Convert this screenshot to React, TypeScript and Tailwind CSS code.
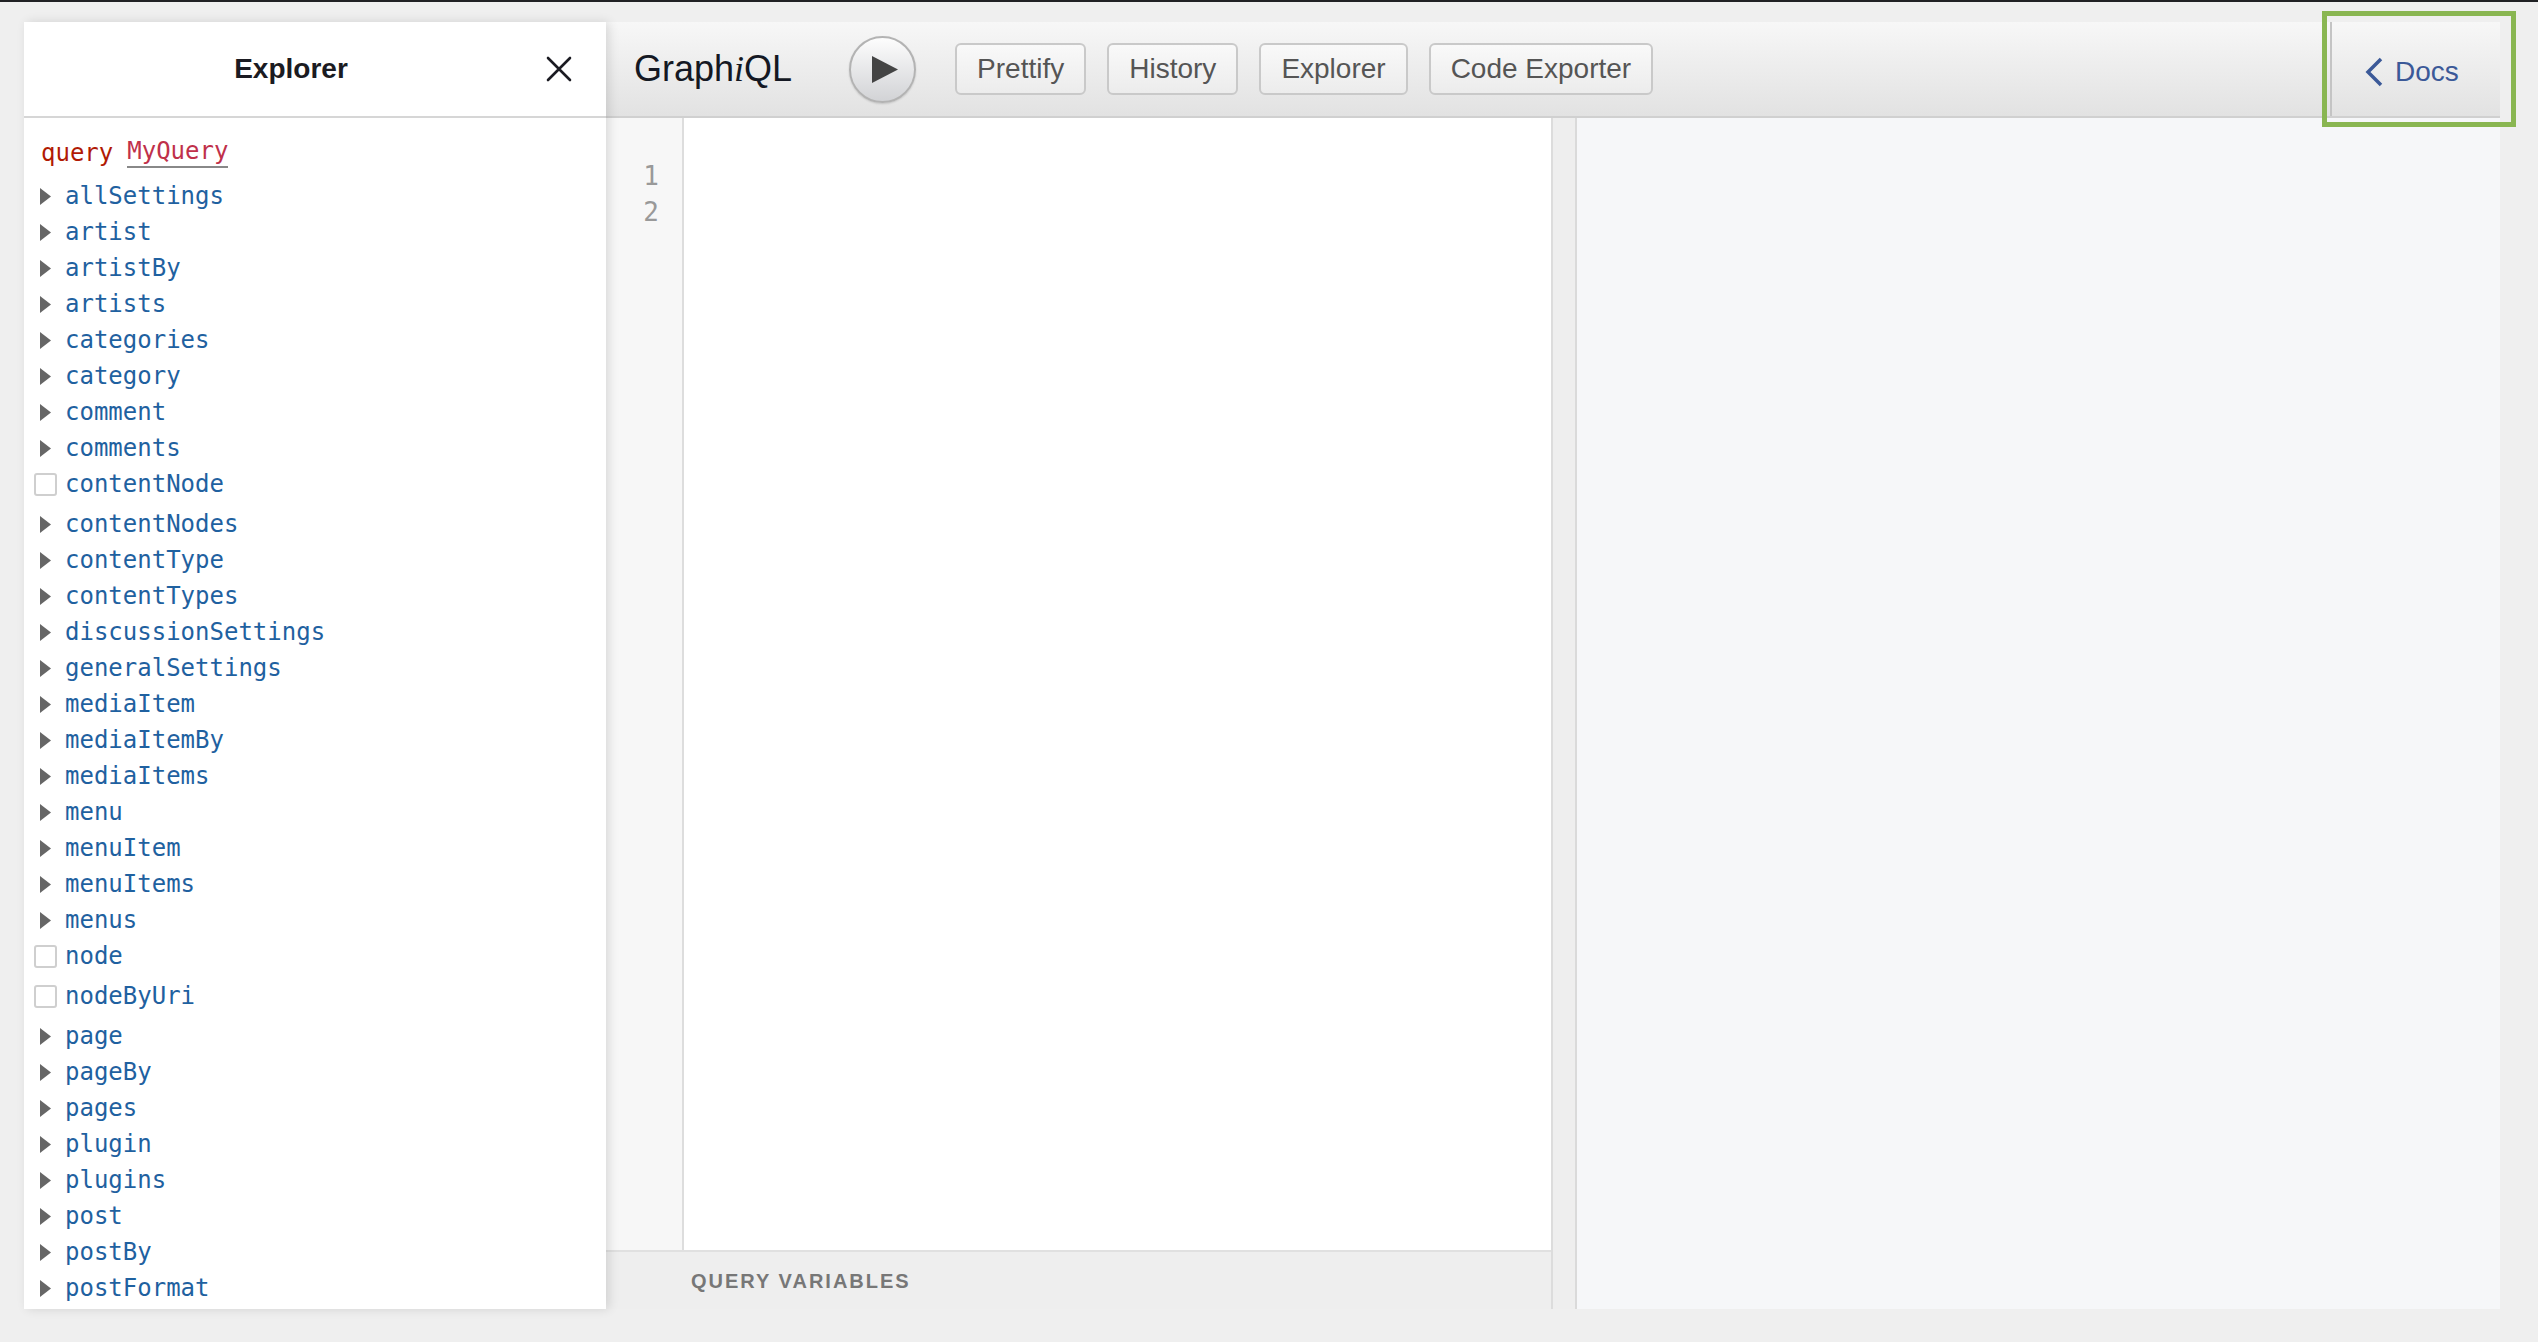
import React from "react";

const fields: { name: string; box?: boolean }[] = [
  { name: "allSettings" },
  { name: "artist" },
  { name: "artistBy" },
  { name: "artists" },
  { name: "categories" },
  { name: "category" },
  { name: "comment" },
  { name: "comments" },
  { name: "contentNode", box: true },
  { name: "contentNodes" },
  { name: "contentType" },
  { name: "contentTypes" },
  { name: "discussionSettings" },
  { name: "generalSettings" },
  { name: "mediaItem" },
  { name: "mediaItemBy" },
  { name: "mediaItems" },
  { name: "menu" },
  { name: "menuItem" },
  { name: "menuItems" },
  { name: "menus" },
  { name: "node", box: true },
  { name: "nodeByUri", box: true },
  { name: "page" },
  { name: "pageBy" },
  { name: "pages" },
  { name: "plugin" },
  { name: "plugins" },
  { name: "post" },
  { name: "postBy" },
  { name: "postFormat" },
];

const mono = "font-['DejaVu_Sans_Mono',monospace]";
const sans = "font-['Liberation_Sans',Arial,sans-serif]";

const FieldRow = ({ name, box }: { name: string; box?: boolean }) => {
  if (box) {
    return (
      <div className="flex h-[40px] items-center pb-[4px] pl-[10px]">
        <span className="mr-[8px] h-[23px] w-[23px] rounded-[3px] border-2 border-[#cfcfcf] bg-white" />
        <span className="text-[24px] leading-none text-[#1f61a0]">{name}</span>
      </div>
    );
  }
  return (
    <div className="flex h-[36px] items-center pl-[16px]">
      <svg width="11" height="17" viewBox="0 0 11 17" className="mr-[14px]">
        <polygon points="0,0 11,8.5 0,17" fill="#666" />
      </svg>
      <span className="text-[24px] leading-none text-[#1f61a0]">{name}</span>
    </div>
  );
};

const ToolButton = ({ label }: { label: string }) => (
  <button className="h-[52px] rounded-[6px] border-2 border-[#c9c9c9] bg-linear-to-b from-[#f9f9f9] to-[#ececec] px-[20px] text-[28px] leading-none text-[#555]">
    {label}
  </button>
);

const App = () => {
  return (
    <div className={`relative h-[1342px] w-[2538px] overflow-hidden bg-[#efefef] ${sans}`}>
      <div className="h-[2px] bg-[#202124]" />

      <div className="ml-[24px] mt-[20px] flex h-[1287px] w-[2476px]">
        {/* explorer */}
        <div className="relative z-10 flex w-[582px] flex-col bg-white shadow-[3px_0_10px_rgba(0,0,0,0.12)]">
          <div className="flex h-[96px] shrink-0 items-center border-b-2 border-[#d6d6d6] pl-[46px]">
            <div className="flex-1 text-center text-[28px] font-bold text-[#1b1b22]">Explorer</div>
            <div className="flex w-[94px] justify-center">
              <svg width="26" height="26" viewBox="0 0 26 26">
                <path d="M2 2 L24 24 M24 2 L2 24" stroke="#1b1b22" strokeWidth="2.6" strokeLinecap="round" />
              </svg>
            </div>
          </div>
          <div className={`flex-1 overflow-hidden pt-[17px] ${mono}`}>
            <div className="flex h-[36px] items-center pl-[17px] text-[24px] leading-none">
              <span className="text-[#b11a04]">query</span>
              <span className="ml-[14px] border-b-2 border-[#888] pb-[3px] text-[#c0304a]">MyQuery</span>
            </div>
            <div className="mt-[7px]">
              {fields.map((f) => (
                <FieldRow key={f.name} name={f.name} box={f.box} />
              ))}
            </div>
          </div>
        </div>

        {/* main */}
        <div className="flex flex-1 flex-col">
          <div className="flex h-[96px] shrink-0 items-center border-b-2 border-[#d0d0d0] bg-linear-to-b from-[#f7f7f7] to-[#e2e2e2] pl-[28px]">
            <div className="text-[36px] leading-none text-[#141823]">
              Graph<em className="font-['Liberation_Serif',serif]">i</em>QL
            </div>
            <button className="ml-[57px] flex h-[67px] w-[67px] items-center justify-center rounded-full border-2 border-[#b3b3b3] bg-linear-to-b from-[#fdfdfd] to-[#d2d3d6] shadow-[0_1px_2px_rgba(0,0,0,0.15)]">
              <svg width="26" height="27" viewBox="0 0 26 27" className="ml-[4px]">
                <polygon points="0,0 26,13.5 0,27" fill="#444" />
              </svg>
            </button>
            <div className="ml-[39px] flex gap-[21px]">
              <ToolButton label="Prettify" />
              <ToolButton label="History" />
              <ToolButton label="Explorer" />
              <ToolButton label="Code Exporter" />
            </div>
            <div className="flex-1" />
            <div className="flex h-full w-[170px] items-center border-l-2 border-[#c4c4c4] pl-[32px] pt-[6px] text-[#3b5998]">
              <svg width="20" height="30" viewBox="0 0 20 30" className="mr-[11px]">
                <path d="M17 2 L4 15 L17 28" stroke="#3b5998" strokeWidth="3.5" fill="none" />
              </svg>
              <span className="text-[28px] leading-none">Docs</span>
            </div>
          </div>

          <div className="flex flex-1">
            <div className="flex w-[947px] flex-col border-r-2 border-[#dcdcdc]">
              <div className="flex flex-1">
                <div className={`w-[78px] border-r-2 border-[#dddddd] bg-[#f7f7f7] pr-[23px] pt-[40px] text-right text-[26px] leading-[36px] text-[#999] ${mono}`}>
                  <div>1</div>
                  <div>2</div>
                </div>
                <div className="flex-1 bg-white" />
              </div>
              <div className="flex h-[59px] items-center border-t-2 border-[#e0e0e0] bg-[#eeeeee] pl-[85px] text-[20px] font-bold tracking-[2px] text-[#777]">
                QUERY VARIABLES
              </div>
            </div>
            <div className="w-[24px] border-r-2 border-[#dadada] bg-[#eeeeee]" />
            <div className="flex-1 bg-[#f6f7f9]" />
          </div>
        </div>
      </div>

      <div className="absolute left-[2322px] top-[11px] h-[116px] w-[194px] border-[5px] border-[#89b651]" />
    </div>
  );
};

export default App;
